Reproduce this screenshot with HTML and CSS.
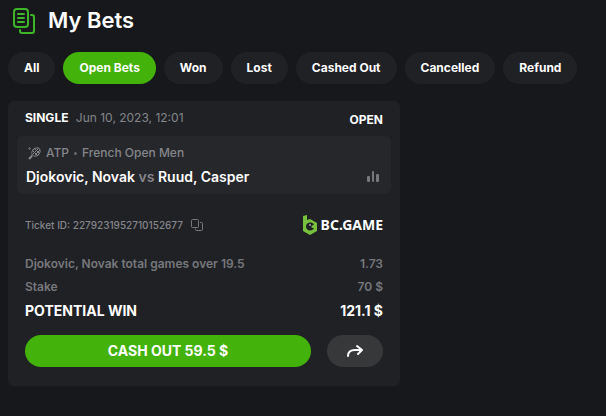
FILE: index.html
```html
<!doctype html>
<html lang="en">
    <head>
        <meta charset="utf-8">
        <title>My Bets</title>
        <meta name="viewport" content="width=device-width, initial-scale=1.0" />
        <link rel="stylesheet" href="styles.css">
    </head>
    <body>
        <header class="page-header">
            <svg class="page-icon" width="24" height="27" viewBox="0 0 24 27" fill="none" stroke="#3fb629" stroke-width="2" stroke-linecap="round" stroke-linejoin="round">
                <rect x="2" y="1" width="14" height="18" rx="3" />
                <path d="M6 6h6M6 10h6M6 14h6" />
                <path d="M19 7h1a2 2 0 0 1 2 2v14a2 2 0 0 1-2 2H10a2 2 0 0 1-2-2v-1" />
            </svg>
            <h1>My Bets</h1>
        </header>
        <nav class="tabs">
            <button class="tab">All</button>
            <button class="tab active">Open Bets</button>
            <button class="tab">Won</button>
            <button class="tab">Lost</button>
            <button class="tab">Cashed Out</button>
            <button class="tab">Cancelled</button>
            <button class="tab">Refund</button>
        </nav>
        <main class="bets">
            <article class="bet">
                <div class="row bet-header">
                    <div><b>SINGLE</b> <time class="date" datetime="2023-06-10T12:01">Jun 10, 2023, 12:01</time></div>
                    <b class="status">OPEN</b>
                </div>
                <div class="event">
                    <div class="league">
                        <svg width="13" height="13" viewBox="0 0 13 13" fill="none" stroke="#85868a" stroke-width="1">
                            <ellipse cx="8" cy="5" rx="4.6" ry="3.6" transform="rotate(-45 8 5)" />
                            <path d="M5 4l4 4M7 2l4 4M5 7l5-5M7 8l5-5M4 8l-3 4" />
                            <path d="M1 12l3-3" stroke-width="2" />
                            <circle cx="1.500" cy="1.500" r="0.700" />
                        </svg>
                        <span>ATP</span>
                        <i class="dot"></i>
                        <span>French Open Men</span>
                    </div>
                    <div class="match">
                        <div>Djokovic, Novak <span class="vs">vs</span> Ruud, Casper</div>
                        <svg width="12" height="12" viewBox="0 0 12 12" fill="#77787b">
                            <rect x="0" y="5" width="3" height="6" rx="1" />
                            <rect x="5" y="0" width="2" height="11" rx="1" />
                            <rect x="9" y="3" width="3" height="8" rx="1" />
                        </svg>
                    </div>
                </div>
                <div class="row ticket">
                    <div class="ticket-id">
                        <span>Ticket ID: 2279231952710152677</span>
                        <button class="copy" aria-label="Copy ticket ID">
                            <svg width="12" height="12" viewBox="0 0 12 12" fill="none" stroke="#77787b" stroke-width="1">
                                <rect x="0.5" y="0.5" width="7" height="8" rx="1" />
                                <path d="M9 3.500h1.500a1 1 0 0 1 1 1v6a1 1 0 0 1-1 1h-5a1 1 0 0 1-1-1v-1" />
                            </svg>
                        </button>
                    </div>
                    <div class="brand">
                        <svg width="16" height="20" viewBox="0 0 16 20">
                            <path d="M1 1l4-1v5l3-1 7 4v8l-7 4-7-4z" fill="#78c13d" />
                            <path d="M12 9.500C10 6.500 4 7 4 11.500C4 16 10 16.500 12 13.500L9.500 12.500L9.500 11z" fill="#202125" />
                            <circle cx="8" cy="10" r="0.800" fill="#fff" />
                        </svg>
                        <span>BC.GAME</span>
                    </div>
                </div>
                <dl class="summary">
                    <div class="row">
                        <dt>Djokovic, Novak total games over 19.5</dt>
                        <dd>1.73</dd>
                    </div>
                    <div class="row">
                        <dt>Stake</dt>
                        <dd>70 $</dd>
                    </div>
                    <div class="row total">
                        <dt>POTENTIAL WIN</dt>
                        <dd>121.1 $</dd>
                    </div>
                </dl>
                <div class="row actions">
                    <button class="cashout">CASH OUT 59.5 $</button>
                    <button class="share" aria-label="Share">
                        <svg width="18" height="14" viewBox="0 0 18 14" fill="none" stroke="#fff" stroke-width="2" stroke-linecap="round" stroke-linejoin="round">
                            <path d="M2 12c0-4 3-6 7-6h7M11 2l5 4-4 4" />
                        </svg>
                    </button>
                </div>
            </article>
        </main>
    </body>
</html>
```

FILE: styles.css
```css
* {
    box-sizing: border-box;
}
body {
    margin: 0;
    padding: 5px 8px;
    background-color: #17181b;
    color: #fff;
    font-family: Inter, "Liberation Sans", sans-serif;
    font-size: 12px;
    line-height: 16px;
}
button {
    border: 0;
    padding: 0;
    color: inherit;
    font: inherit;
    cursor: pointer;
}
svg {
    display: block;
    flex: none;
}
.page-header {
    display: flex;
    align-items: flex-start;
    gap: 12px;
    padding: 1px 4px;
}
.page-header h1 {
    margin: 0;
    font-size: 22px;
    font-weight: 600;
    line-height: 28px;
}
.page-icon {
    margin-top: 2px;
}
.tabs {
    display: flex;
    flex-wrap: wrap;
    gap: 8px;
    margin: 16px 0 17px;
}
.tab {
    height: 32px;
    padding: 0 16px;
    border-radius: 16px;
    background-color: #202125;
    font-weight: 700;
}
.tab.active {
    background-color: #43b30b;
}
.bets {
    display: grid;
    grid-template-columns: repeat(auto-fill, minmax(min(100%, 300px), 392px));
}
.bet {
    padding: 9px 9px 19px;
    border-radius: 6px;
    background-color: #202125;
}
.row {
    display: flex;
    align-items: center;
    justify-content: space-between;
    padding: 0 8px;
}
.bet-header {
    align-items: flex-start;
    padding-bottom: 8px;
}
.date {
    margin-left: 4px;
    color: #85868a;
}
.status {
    margin-top: 2px;
}
.event {
    padding: 9px 9px 7px;
    border-radius: 6px;
    background-color: #26272b;
}
.league {
    display: flex;
    align-items: center;
    gap: 5px;
    color: #85868a;
    padding-left: 2px;
    font-weight: 500;
}
.dot {
    width: 3px;
    height: 3px;
    border-radius: 50%;
    background-color: #66676b;
}
.match {
    display: flex;
    align-items: center;
    justify-content: space-between;
    margin-top: 6px;
    padding-right: 3px;
    font-size: 14px;
    font-weight: 600;
    line-height: 20px;
}
.vs {
    color: #85868a;
}
.ticket {
    margin: 21px 0 17px;
    color: #85868a;
    font-size: 10px;
    font-weight: 500;
}
.ticket-id {
    display: flex;
    align-items: center;
    gap: 8px;
}
.copy {
    background: none;
}
.brand {
    display: flex;
    align-items: center;
    gap: 3px;
    color: #fff;
    font-family: "Noto Sans", sans-serif;
    font-size: 14px;
    font-weight: 700;
}
.summary {
    margin: 0;
    color: #77787b;
    font-weight: 600;
}
.summary .row {
    line-height: 23px;
}
.summary dd {
    margin: 0;
}
.summary .total {
    color: #fff;
    font-size: 14px;
    font-weight: 700;
    line-height: 26px;
}
.actions {
    gap: 16px;
    margin-top: 11px;
}
.cashout {
    flex: 1;
    height: 32px;
    border-radius: 16px;
    background-color: #43b30b;
    font-size: 14px;
    font-weight: 700;
}
.share {
    display: flex;
    align-items: center;
    justify-content: center;
    width: 56px;
    height: 32px;
    border-radius: 16px;
    background-color: #37383a;
}
```
